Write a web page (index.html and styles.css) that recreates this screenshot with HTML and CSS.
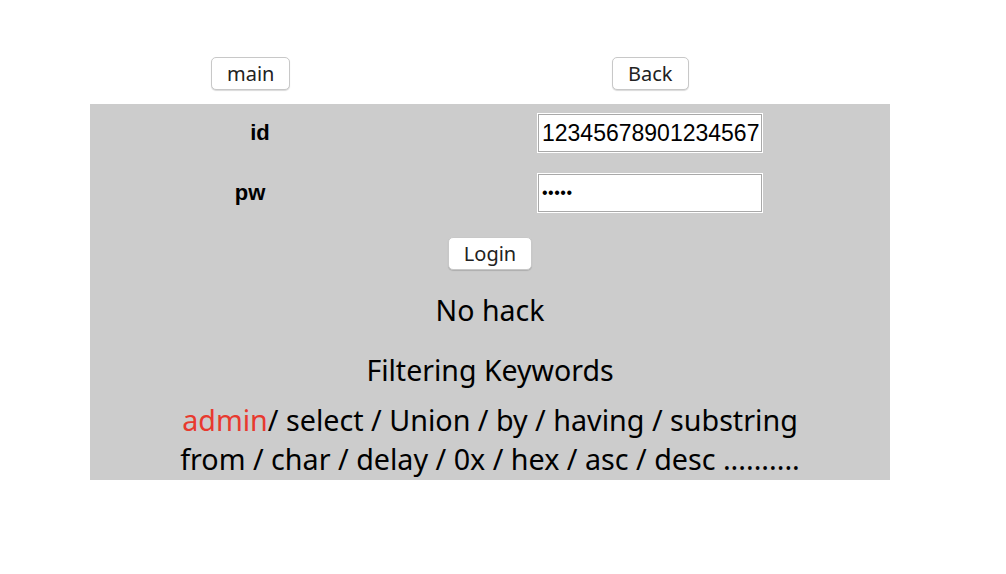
FILE: index.html
```html
<!DOCTYPE html>
<html lang="ko">
<head>
<meta charset="utf-8">
<title>Login</title>
<link rel="stylesheet" href="styles.css">
</head>
<body>
<div class="page">
  <div class="topbar">
    <div class="topcell left"><button class="btn">main</button></div>
    <div class="topcell right"><button class="btn">Back</button></div>
  </div>
  <div class="panel">
    <div class="row row-id">
      <div class="label">id</div>
      <div class="field"><input class="inp" type="text" value="12345678901234567890"></div>
    </div>
    <div class="row row-pw">
      <div class="label pw">pw</div>
      <div class="field"><input class="inp pwd" type="password" value="12345"></div>
    </div>
    <div class="center login-wrap"><button class="btn">Login</button></div>
    <div class="center msg">No hack</div>
    <div class="center title">Filtering Keywords</div>
    <div class="center kw">
      <div><span class="red">admin</span>/ select / Union / by / having / substring</div>
      <div>from / char / delay / 0x / hex / asc / desc ..........</div>
    </div>
  </div>
</div>
</body>
</html>
```

FILE: styles.css
```css
html, body {
  margin: 0;
  padding: 0;
  background: #ffffff;
}
body {
  font-family: "Noto Sans", "Open Sans", sans-serif;
  color: #000;
}
.page {
  padding: 57px 0 0 90px;
  width: 800px;
}
.topbar {
  display: flex;
  height: 47px;
}
.topcell {
  display: flex;
}
.topcell.left {
  width: 400px;
  padding-left: 121px;
  box-sizing: border-box;
}
.topcell.right {
  padding-left: 122px;
}
.btn {
  font-family: "Noto Sans", "Open Sans", sans-serif;
  font-size: 20px;
  height: 33px;
  padding: 0 15px;
  background: #ffffff;
  border: 1px solid #c8c8c8;
  border-radius: 5px;
  box-shadow: 0 1px 1px rgba(0,0,0,0.15);
  color: #222;
  line-height: 31px;
}
.panel {
  background: #cccccc;
  height: 376px;
  box-sizing: border-box;
  padding-top: 10px;
}
.row {
  display: flex;
  align-items: center;
  height: 38px;
}
.row-pw {
  margin-top: 22px;
}
.label {
  width: 340px;
  text-align: center;
  font-family: "Liberation Sans", Arial, sans-serif;
  font-weight: bold;
  font-size: 22px;
}
.label.pw {
  width: 320px;
}
.field {
  margin-left: 108px;
}
.row-pw .field {
  margin-left: 128px;
}
.inp {
  box-sizing: border-box;
  width: 224px;
  height: 38px;
  border: 1px solid #a9a9a9;
  box-shadow: 0 0 0 1px #ffffff;
  background: #fff;
  font-family: "Liberation Sans", Arial, sans-serif;
  font-size: 23px;
  padding: 0 2px 0 3px;
  margin: 0;
  color: #000;
  outline: none;
}
.inp.pwd {
  font-size: 16px;
  letter-spacing: 0.5px;
}
.center {
  text-align: center;
}
.login-wrap {
  margin-top: 25px;
  height: 33px;
}
.msg {
  font-size: 28.5px;
  margin-top: 21px;
  line-height: 38px;
}
.title {
  font-size: 28.5px;
  margin-top: 22px;
  line-height: 38px;
}
.kw {
  font-size: 28.7px;
  margin-top: 12px;
  line-height: 38.5px;
}
.red {
  color: #e8392e;
}
```
